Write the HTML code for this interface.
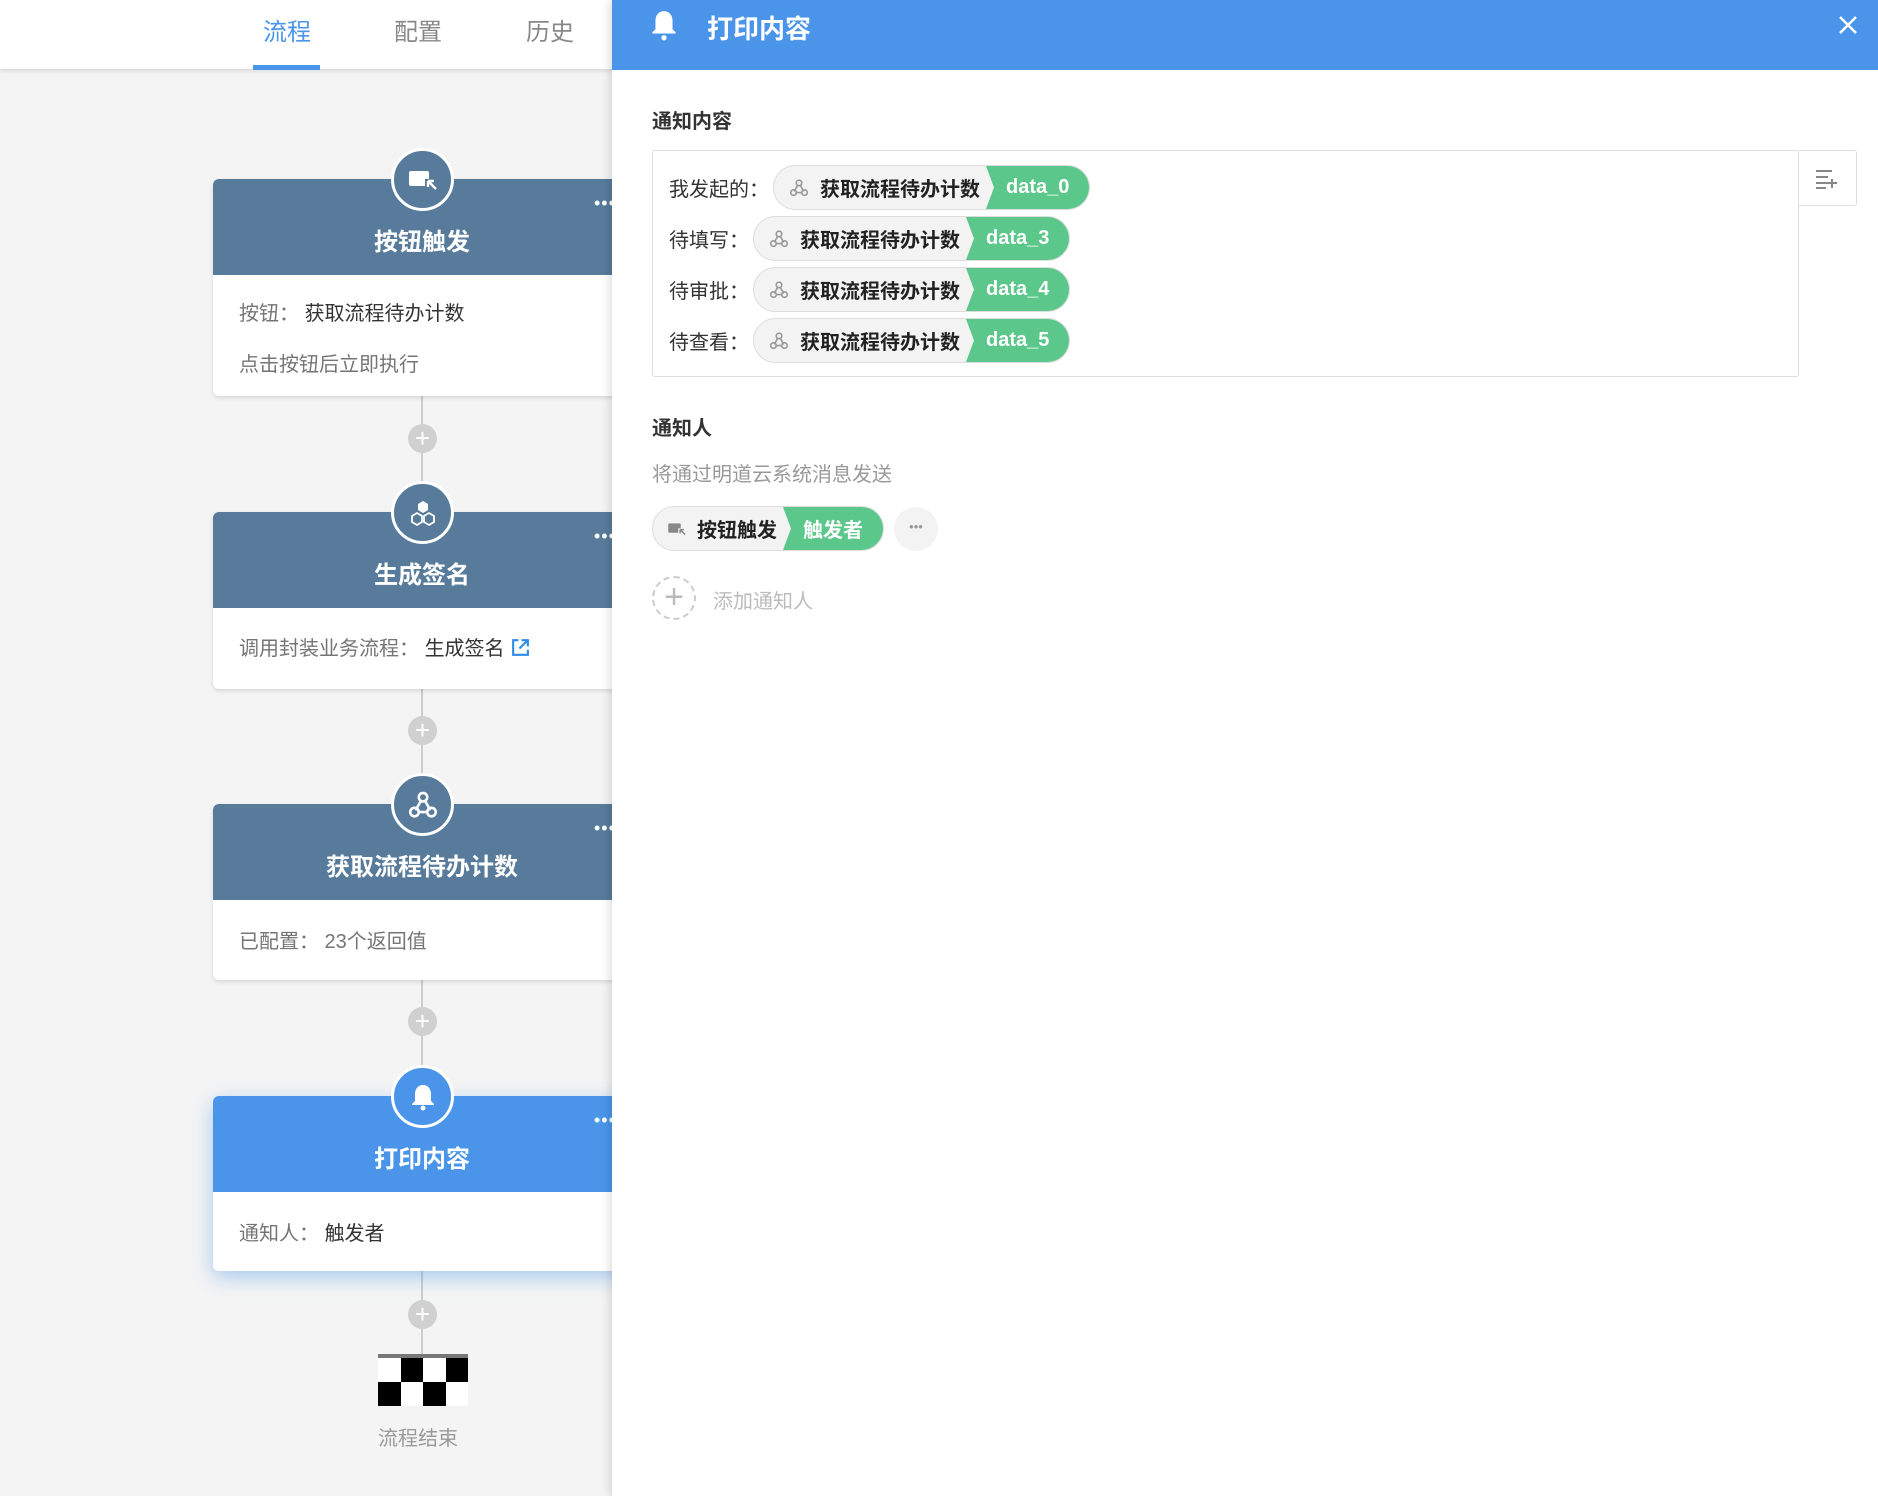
<!DOCTYPE html>
<html><head><meta charset="utf-8"><style>
*{margin:0;padding:0;box-sizing:border-box}
body{width:1878px;height:1496px;position:relative;overflow:hidden;background:#f4f4f4;font-family:"Liberation Sans","Noto Sans CJK SC",sans-serif;color:#333}
.abs{position:absolute}
.top{left:0;top:0;width:1878px;height:70px;background:#fff;border-bottom:1px solid #ddd;box-shadow:0 2px 3px rgba(0,0,0,.08)}
.tab{position:absolute;top:12px;font-size:24px;color:#888;transform:translateX(-50%)}
.line{position:absolute;left:421px;width:2px;background:#ccc}
.plus{position:absolute;left:408px;width:29px;height:29px;border-radius:50%;background:#d0d0d0;color:#fff;font-size:26px;line-height:28px;text-align:center}
.card{position:absolute;left:213px;width:420px;background:#fff;border-radius:6px;box-shadow:0 2px 4px rgba(0,0,0,.12)}
.card .h{height:96px;background:#587b9b;border-radius:6px 6px 0 0;color:#fff;font-size:24px;font-weight:bold;text-align:center;line-height:1}
.card .h span{position:absolute;left:0;width:418px;text-align:center;top:52px}
.card .b{padding:0 26px;font-size:20px;color:#757575}
.card .b b{font-weight:normal;color:#333}
.dots{position:absolute;left:381px;top:14px;color:#fff;font-size:18px;letter-spacing:1px}
.circ{position:absolute;left:178px;top:-31px;width:63px;height:63px;border-radius:50%;border:3px solid #fff;background:#587b9b;display:flex;align-items:center;justify-content:center}
.panel{left:612px;top:0;width:1266px;height:1496px;background:#fff;box-shadow:-3px 0 8px rgba(0,0,0,.12)}
.ph{height:70px;background:#4a95ea;color:#fff}
.sect{position:absolute;left:40px;font-size:20px;font-weight:bold;color:#333}
.row{position:absolute;left:16px;display:flex;align-items:center;font-size:20px;color:#333}
.pill{display:flex;height:45px;border-radius:23px;overflow:hidden;border:1px solid #ddd;background:#f3f3f3;font-weight:bold;font-size:20px;align-items:center}
.pill .g{padding:0 12px 0 14px;display:flex;align-items:center;gap:10px;height:100%;color:#222}
.pill .gr{background:#5cc78a;color:#fff;height:100%;display:flex;align-items:center;padding:0 20px 0 20px;clip-path:polygon(0 0,100% 0,100% 100%,0 100%,8px 50%);margin-left:-6px}
</style></head><body>
<svg width="0" height="0" style="position:absolute"><defs>
<symbol id="wh" viewBox="0 0 24 24"><g fill="none" stroke-width="1.8" stroke-linecap="round"><circle cx="12" cy="6.5" r="3"/><circle cx="6" cy="17" r="3"/><circle cx="18" cy="17" r="3"/><path d="M10.5 9.2L7.2 15"/><path d="M9 17h6"/><path d="M13.5 9.2L16.8 15"/></g></symbol>
</defs></svg>
<div class="abs top">
<div class="tab" style="left:287px;color:#4a95ea">流程</div>
<div class="tab" style="left:418px">配置</div>
<div class="tab" style="left:550px">历史</div>
<div class="abs" style="left:253px;top:65px;width:67px;height:5px;background:#4a95ea"></div>
</div>

<div class="line" style="top:396px;height:116px"></div>
<div class="plus" style="top:424px">+</div>
<div class="line" style="top:689px;height:115px"></div>
<div class="plus" style="top:716px">+</div>
<div class="line" style="top:980px;height:116px"></div>
<div class="plus" style="top:1007px">+</div>
<div class="line" style="top:1271px;height:85px"></div>
<div class="plus" style="top:1300px">+</div>

<div class="card" style="top:179px;height:217px">
<div class="h"><span>按钮触发</span></div>
<div class="circ"><svg width="32" height="24" viewBox="0 0 32 24"><rect x="2" y="3" width="20" height="15" rx="2" fill="#fff"/><rect x="18" y="11" width="12" height="12" fill="#587b9b"/><path d="M21 13h6M21 13v6M21 13l8 8" stroke="#fff" stroke-width="2.4" fill="none"/></svg></div>
<div class="dots">•••</div>
<div class="b"><div style="padding-top:22px">按钮： <b>获取流程待办计数</b></div><div style="padding-top:22px">点击按钮后立即执行</div></div>
</div>

<div class="card" style="top:512px;height:177px">
<div class="h"><span>生成签名</span></div>
<div class="circ"><svg width="30" height="30" viewBox="0 0 30 30"><path d="M15 3l5 3v6l-5 3-5-3V6z" fill="#fff"/><path d="M9 15l5 3v6l-5 3-5-3v-6zM21 15l5 3v6l-5 3-5-3v-6z" fill="none" stroke="#fff" stroke-width="1.8"/></svg></div>
<div class="dots">•••</div>
<div class="b"><div style="padding-top:24px">调用封装业务流程： <b>生成签名</b> <svg width="21" height="21" viewBox="0 0 20 20" style="vertical-align:-3px"><path d="M8 3H3v14h14v-5M11 3h6v6M17 3l-8 8" stroke="#2f8ae8" stroke-width="2" fill="none"/></svg></div></div>
</div>

<div class="card" style="top:804px;height:176px">
<div class="h"><span>获取流程待办计数</span></div>
<div class="circ"><svg width="34" height="34" stroke="#fff"><use href="#wh"/></svg></div>
<div class="dots">•••</div>
<div class="b"><div style="padding-top:25px">已配置： 23个返回值</div></div>
</div>

<div class="card" style="top:1096px;height:175px;box-shadow:0 6px 20px rgba(74,149,234,.45)">
<div class="h" style="background:#4a95ea"><span>打印内容</span></div>
<div class="circ" style="background:#4a95ea"><svg width="26" height="28" viewBox="0 0 26 28"><path d="M13 2c-5 0-8 4-8 9v7l-3 3v1h22v-1l-3-3v-7c0-5-3-9-8-9z" fill="#fff"/><circle cx="13" cy="25" r="2.5" fill="#fff"/></svg></div>
<div class="dots">•••</div>
<div class="b"><div style="padding-top:25px">通知人： <b>触发者</b></div></div>
</div>

<div class="abs" style="left:378px;top:1354px;width:90px;height:52px">
<div style="height:4px;background:#777"></div>
<div style="display:grid;grid-template-columns:repeat(4,22.5px);grid-template-rows:24px 24px">
<div style="background:#fff"></div><div style="background:#000"></div><div style="background:#fff"></div><div style="background:#000"></div>
<div style="background:#000"></div><div style="background:#fff"></div><div style="background:#000"></div><div style="background:#fff"></div>
</div></div>
<div class="abs" style="left:378px;top:1422px;font-size:20px;color:#999">流程结束</div>

<div class="abs panel">
<div class="ph" style="position:relative">
<svg class="abs" style="left:38px;top:9px" width="28" height="32" viewBox="0 0 26 30"><path d="M13 2c-5 0-8 4-8 9v8l-3 3v1h22v-1l-3-3v-8c0-5-3-9-8-9z" fill="#fff"/><circle cx="13" cy="27" r="2.5" fill="#fff"/></svg>
<div class="abs" style="left:95px;top:9px;font-size:26px;font-weight:bold">打印内容</div>
<svg class="abs" style="left:1226px;top:15px" width="20" height="20" viewBox="0 0 20 20"><path d="M2 2L18 18M18 2L2 18" stroke="#fff" stroke-width="2.5"/></svg>
</div>
<div class="sect" style="top:105px">通知内容</div>
<div class="abs" style="left:40px;top:150px;width:1147px;height:227px;border:1px solid #ddd;border-radius:3px">
<div class="row" style="top:14px">我发起的：<div class="pill" style="margin-left:4px"><div class="g"><svg width="22" height="22" stroke="#999"><use href="#wh"/></svg>获取流程待办计数</div><div class="gr">data_0</div></div></div>
<div class="row" style="top:65px">待填写：<div class="pill" style="margin-left:4px"><div class="g"><svg width="22" height="22" stroke="#999"><use href="#wh"/></svg>获取流程待办计数</div><div class="gr">data_3</div></div></div>
<div class="row" style="top:116px">待审批：<div class="pill" style="margin-left:4px"><div class="g"><svg width="22" height="22" stroke="#999"><use href="#wh"/></svg>获取流程待办计数</div><div class="gr">data_4</div></div></div>
<div class="row" style="top:167px">待查看：<div class="pill" style="margin-left:4px"><div class="g"><svg width="22" height="22" stroke="#999"><use href="#wh"/></svg>获取流程待办计数</div><div class="gr">data_5</div></div></div>
</div>
<div class="abs" style="left:1187px;top:150px;width:58px;height:56px;border:1px solid #ddd;border-left:none;border-radius:0 3px 3px 0">
<svg class="abs" style="left:16px;top:18px" width="24" height="20" viewBox="0 0 24 20"><path d="M1 2h16M1 8h12M1 14h12M1 19h10M17 10v9M13 14h9" stroke="#888" stroke-width="2" fill="none"/></svg>
</div>
<div class="sect" style="top:412px">通知人</div>
<div class="abs" style="left:40px;top:458px;font-size:20px;color:#999">将通过明道云系统消息发送</div>
<div class="abs" style="left:40px;top:506px;display:flex;align-items:center;gap:10px">
<div class="pill"><div class="g"><svg width="20" height="18" viewBox="0 0 32 24"><rect x="2" y="3" width="20" height="15" rx="2" fill="#888"/><rect x="18" y="11" width="12" height="12" fill="#f3f3f3"/><path d="M21 13h6M21 13v6M21 13l8 8" stroke="#888" stroke-width="2.4" fill="none"/></svg>按钮触发</div><div class="gr">触发者</div></div>
<div style="width:44px;height:44px;border-radius:50%;background:#f3f3f3;color:#999;text-align:center;line-height:40px;font-size:13px">•••</div>
</div>
<div class="abs" style="left:40px;top:576px;width:44px;height:44px;border-radius:50%;border:2px dashed #ccc;color:#bbb;text-align:center;line-height:38px;font-size:34px">+</div>
<div class="abs" style="left:101px;top:585px;font-size:20px;color:#bbb">添加通知人</div>
</div>
</body></html>
